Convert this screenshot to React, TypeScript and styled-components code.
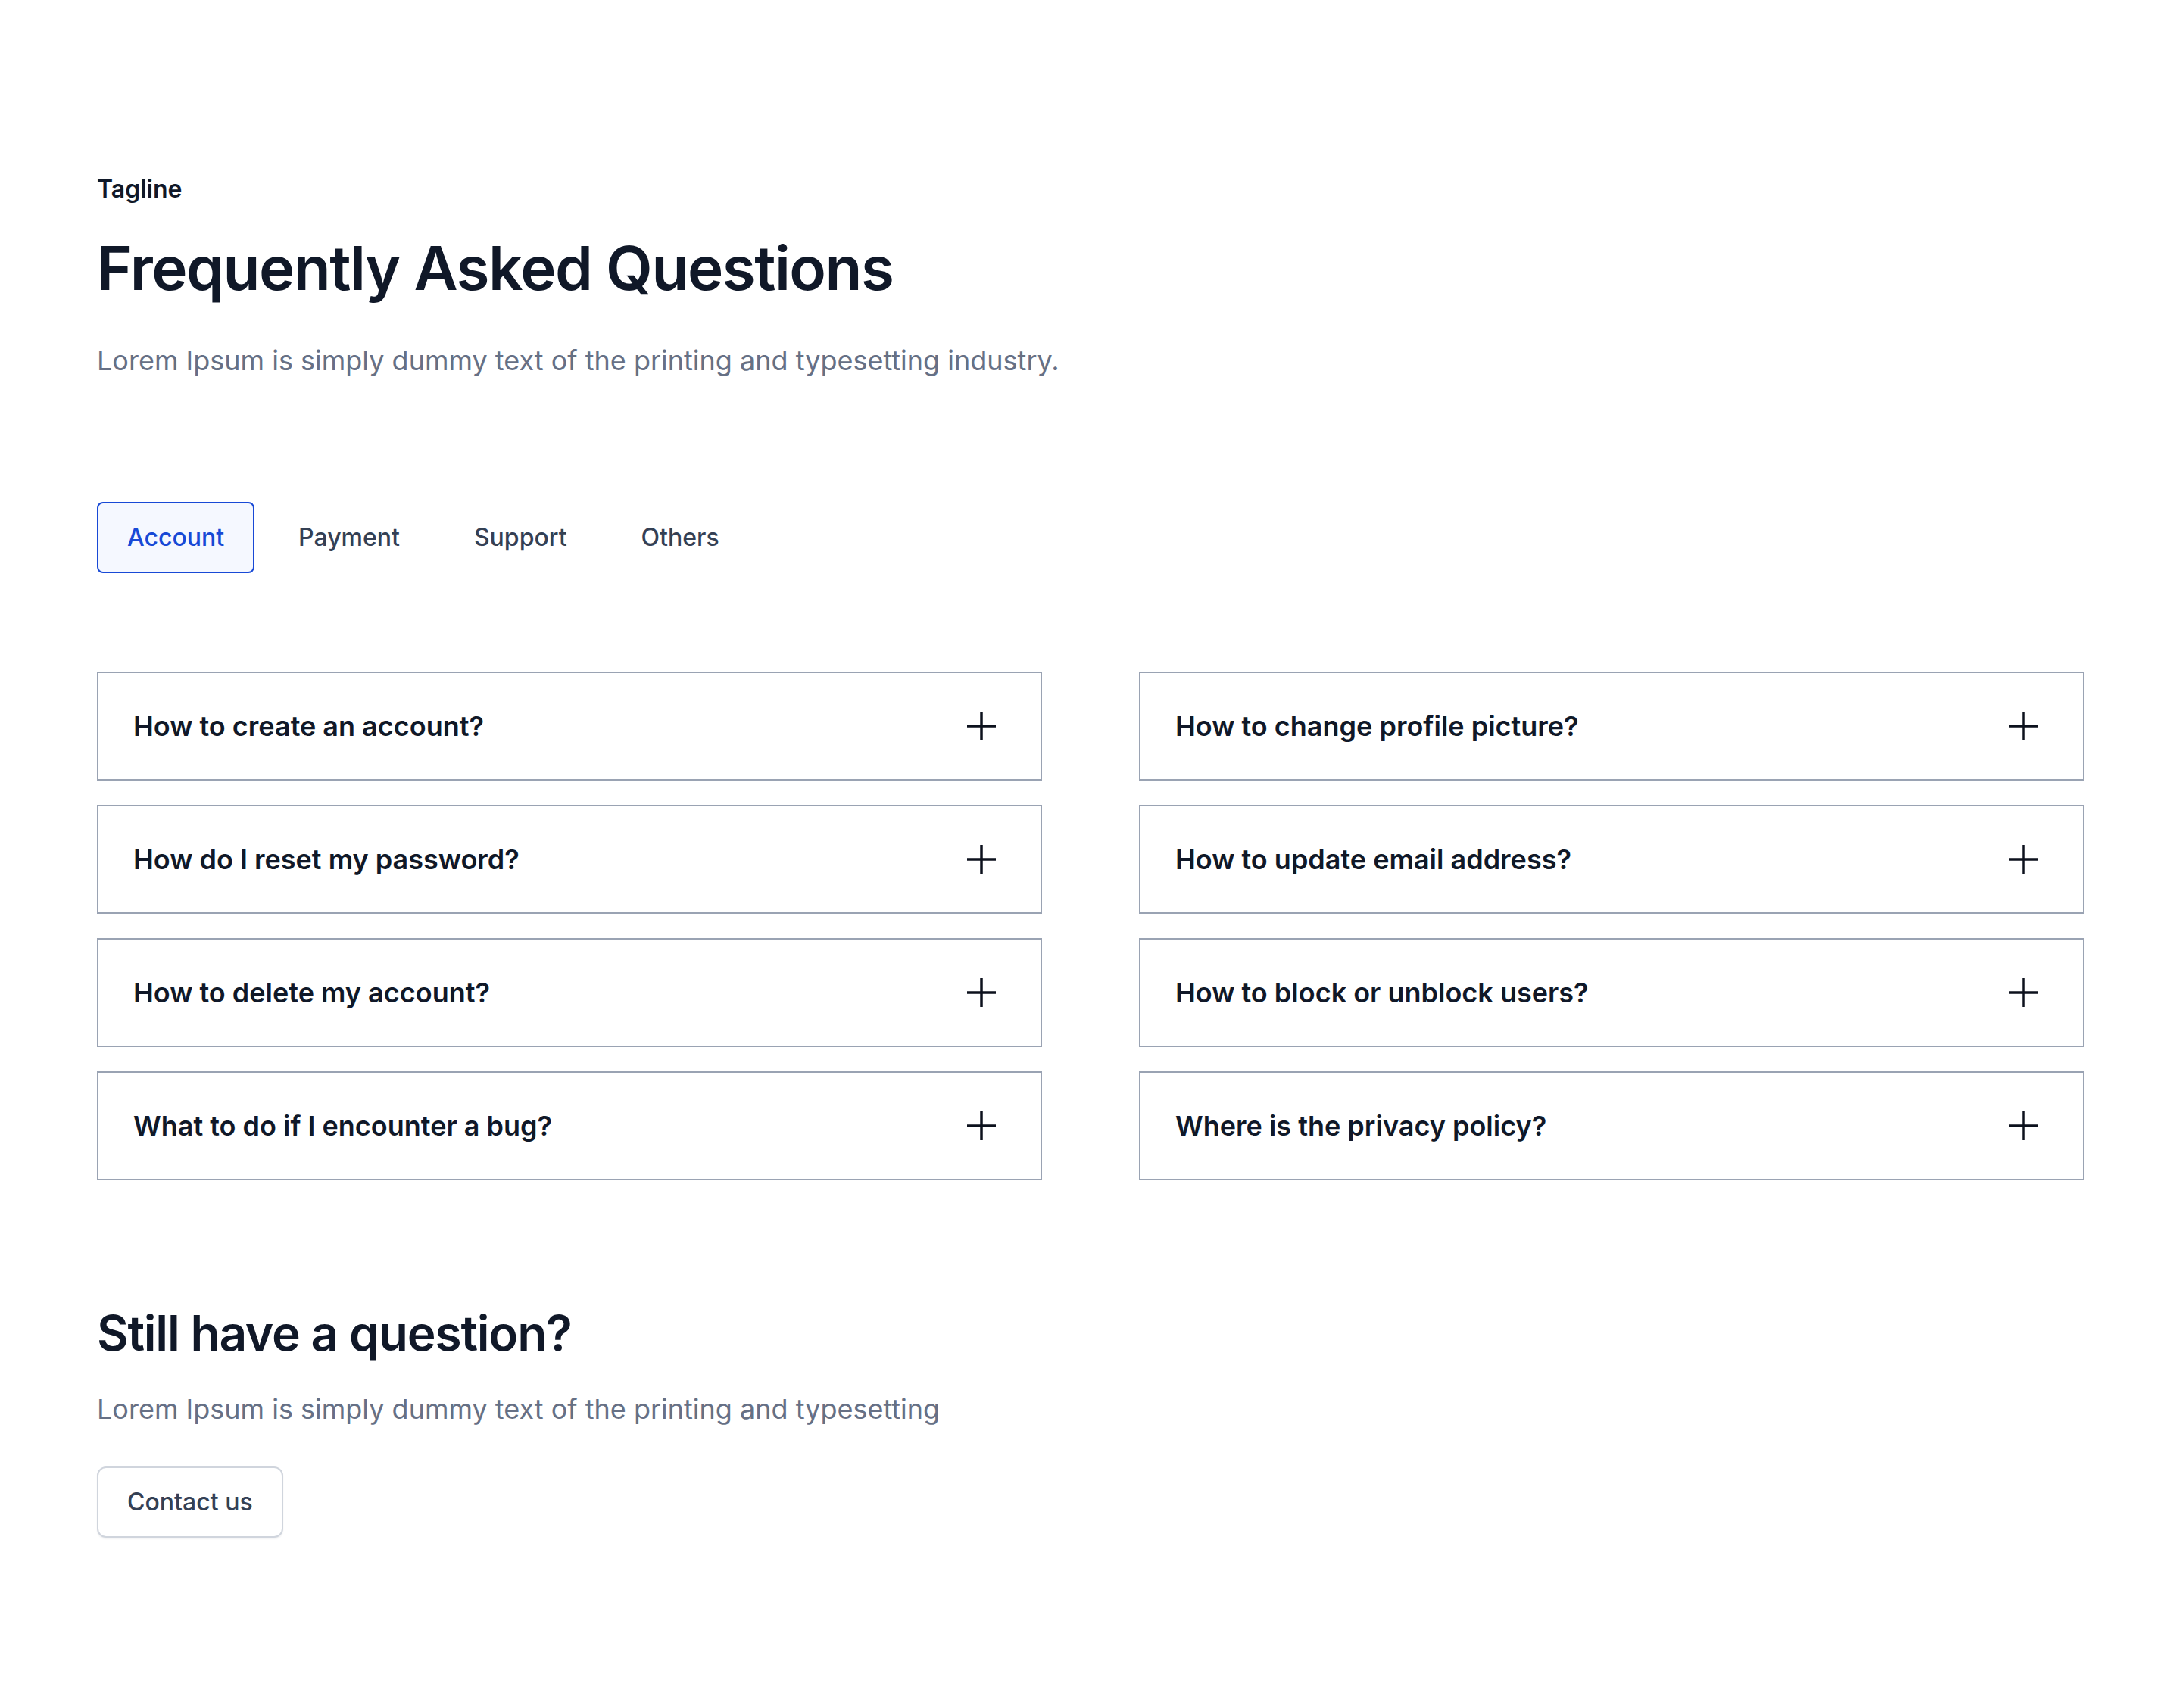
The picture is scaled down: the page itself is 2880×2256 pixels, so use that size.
import React, { useState } from "react";
import styled, { createGlobalStyle } from "styled-components";

const GlobalStyle = createGlobalStyle`
  * {
    box-sizing: border-box;
  }

  body {
    margin: 0;
    background: #ffffff;
    font-family: Inter, "Noto Sans", "Liberation Sans", sans-serif;
    -webkit-font-smoothing: antialiased;
  }
`;

const Page = styled.section`
  width: 2880px;
  min-height: 2256px;
  padding: 226px 128px 160px;
`;

const Tagline = styled.p`
  margin: 0;
  font-size: 32px;
  line-height: 48px;
  font-weight: 600;
  color: #101828;
`;

const Title = styled.h1`
  margin: 32px 0 0;
  font-size: 80px;
  line-height: 96px;
  font-weight: 600;
  letter-spacing: -1.5px;
  color: #101828;
`;

const Lead = styled.p<{ $gap?: number }>`
  margin: ${(p) => p.$gap ?? 46}px 0 0;
  font-size: 36px;
  line-height: 56px;
  font-weight: 400;
  color: #667085;
`;

const TabList = styled.div`
  display: flex;
  gap: 18px;
  margin-top: 159px;
`;

const Tab = styled.button<{ $active?: boolean }>`
  display: inline-flex;
  align-items: center;
  padding: 21px 38px;
  border: 2px solid ${(p) => (p.$active ? "#1849d6" : "transparent")};
  border-radius: 8px;
  background: ${(p) => (p.$active ? "#f5f8ff" : "transparent")};
  color: ${(p) => (p.$active ? "#1849d6" : "#344054")};
  font-family: inherit;
  font-size: 32px;
  line-height: 48px;
  font-weight: 500;
  cursor: pointer;
`;

const Grid = styled.div`
  display: grid;
  grid-template-columns: repeat(2, 1fr);
  column-gap: 128px;
  row-gap: 32px;
  margin-top: 130px;
`;

const Question = styled.button`
  display: flex;
  align-items: center;
  justify-content: space-between;
  height: 144px;
  padding: 0 59px 0 46px;
  border: 2px solid #9aa3b3;
  background: #ffffff;
  font-family: inherit;
  text-align: left;
  cursor: pointer;
`;

const QuestionText = styled.span`
  font-size: 36px;
  line-height: 52px;
  font-weight: 600;
  color: #101828;
`;

const PlusIcon = styled.svg`
  width: 38px;
  height: 38px;
  flex-shrink: 0;
  stroke: #0c111d;
  stroke-width: 3.5;
`;

const Subheading = styled.h2`
  margin: 163px 0 0;
  font-size: 64px;
  line-height: 77px;
  font-weight: 600;
  letter-spacing: -1.2px;
  color: #101828;
`;

const ContactButton = styled.button`
  margin-top: 48px;
  padding: 21px 38px;
  border: 2px solid #d0d5dd;
  border-radius: 12px;
  background: #ffffff;
  box-shadow: 0 2px 2px rgba(16, 24, 40, 0.05);
  color: #344054;
  font-family: inherit;
  font-size: 32px;
  line-height: 48px;
  font-weight: 500;
  cursor: pointer;
`;

const tabs = ["Account", "Payment", "Support", "Others"];

const questions = [
  "How to create an account?",
  "How to change profile picture?",
  "How do I reset my password?",
  "How to update email address?",
  "How to delete my account?",
  "How to block or unblock users?",
  "What to do if I encounter a bug?",
  "Where is the privacy policy?",
];

const Plus = () => (
  <PlusIcon viewBox="0 0 38 38" fill="none">
    <line x1="19" y1="0" x2="19" y2="38" />
    <line x1="0" y1="19" x2="38" y2="19" />
  </PlusIcon>
);

export default function App() {
  const [active, setActive] = useState("Account");

  return (
    <>
      <GlobalStyle />
      <Page>
        <Tagline>Tagline</Tagline>
        <Title>Frequently Asked Questions</Title>
        <Lead>
          Lorem Ipsum is simply dummy text of the printing and typesetting
          industry.
        </Lead>

        <TabList>
          {tabs.map((t) => (
            <Tab key={t} $active={t === active} onClick={() => setActive(t)}>
              {t}
            </Tab>
          ))}
        </TabList>

        <Grid>
          {questions.map((q) => (
            <Question key={q}>
              <QuestionText>{q}</QuestionText>
              <Plus />
            </Question>
          ))}
        </Grid>

        <Subheading>Still have a question?</Subheading>
        <Lead $gap={34}>
          Lorem Ipsum is simply dummy text of the printing and typesetting
        </Lead>
        <ContactButton>Contact us</ContactButton>
      </Page>
    </>
  );
}
